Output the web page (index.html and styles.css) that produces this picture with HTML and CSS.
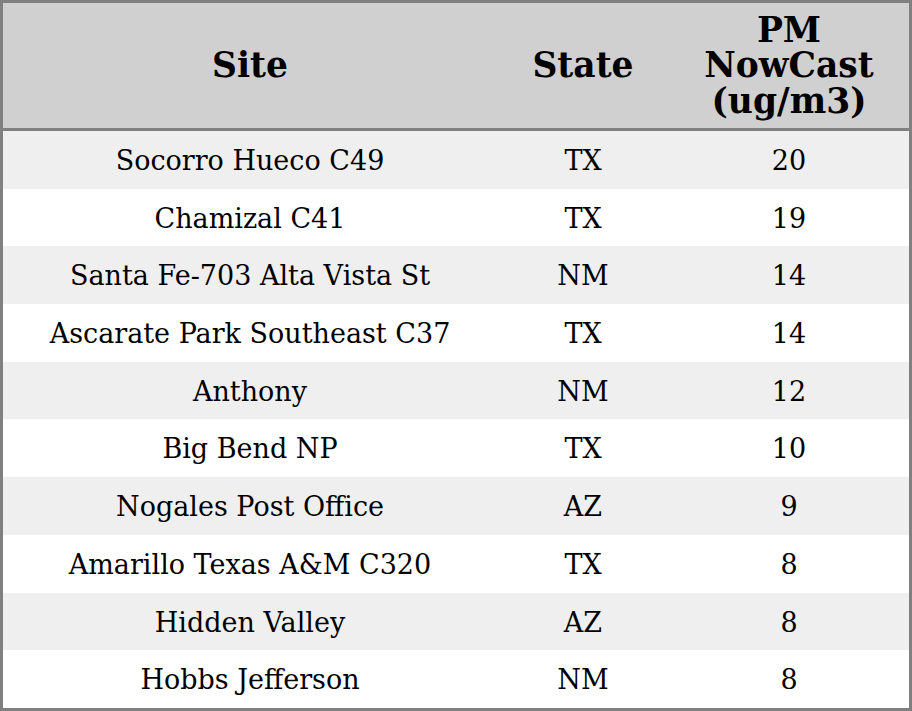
FILE: index.html
```html
<!DOCTYPE html>
<html>
<head>
<meta charset="utf-8">
<link rel="stylesheet" href="styles.css">
</head>
<body>
<table class="aq-table">
  <thead>
    <tr>
      <th class="col-site">Site</th>
      <th class="col-state">State</th>
      <th class="col-pm">PM<br>NowCast<br>(ug/m3)</th>
    </tr>
  </thead>
  <tbody>
    <tr><td>Socorro Hueco C49</td><td>TX</td><td>20</td></tr>
    <tr><td>Chamizal C41</td><td>TX</td><td>19</td></tr>
    <tr><td>Santa Fe-703 Alta Vista St</td><td>NM</td><td>14</td></tr>
    <tr><td>Ascarate Park Southeast C37</td><td>TX</td><td>14</td></tr>
    <tr><td>Anthony</td><td>NM</td><td>12</td></tr>
    <tr><td>Big Bend NP</td><td>TX</td><td>10</td></tr>
    <tr><td>Nogales Post Office</td><td>AZ</td><td>9</td></tr>
    <tr><td>Amarillo Texas A&amp;M C320</td><td>TX</td><td>8</td></tr>
    <tr><td>Hidden Valley</td><td>AZ</td><td>8</td></tr>
    <tr><td>Hobbs Jefferson</td><td>NM</td><td>8</td></tr>
  </tbody>
</table>
</body>
</html>
```

FILE: styles.css
```css
html, body {
  margin: 0;
  padding: 0;
  background: #ffffff;
}
.aq-table {
  width: 912px;
  border-collapse: collapse;
  border: 3px solid #808080;
  font-family: "DejaVu Serif", serif;
  color: #000;
}
.aq-table th {
  background: #d0d0d0;
  font-size: 34.5px;
  font-weight: bold;
  line-height: 35.5px;
  padding: 9.5px 10px 9px;
  border-bottom: 3px solid #808080;
  text-align: center;
}
.col-site { width: 474px; }
.col-state { width: 152px; }
.col-pm { width: 220px; }
.aq-table td {
  font-size: 27px;
  line-height: 31px;
  padding: 14px 10px 12.7px;
  text-align: center;
}
.aq-table tbody tr:nth-child(odd) td {
  background: #efefef;
}
```
